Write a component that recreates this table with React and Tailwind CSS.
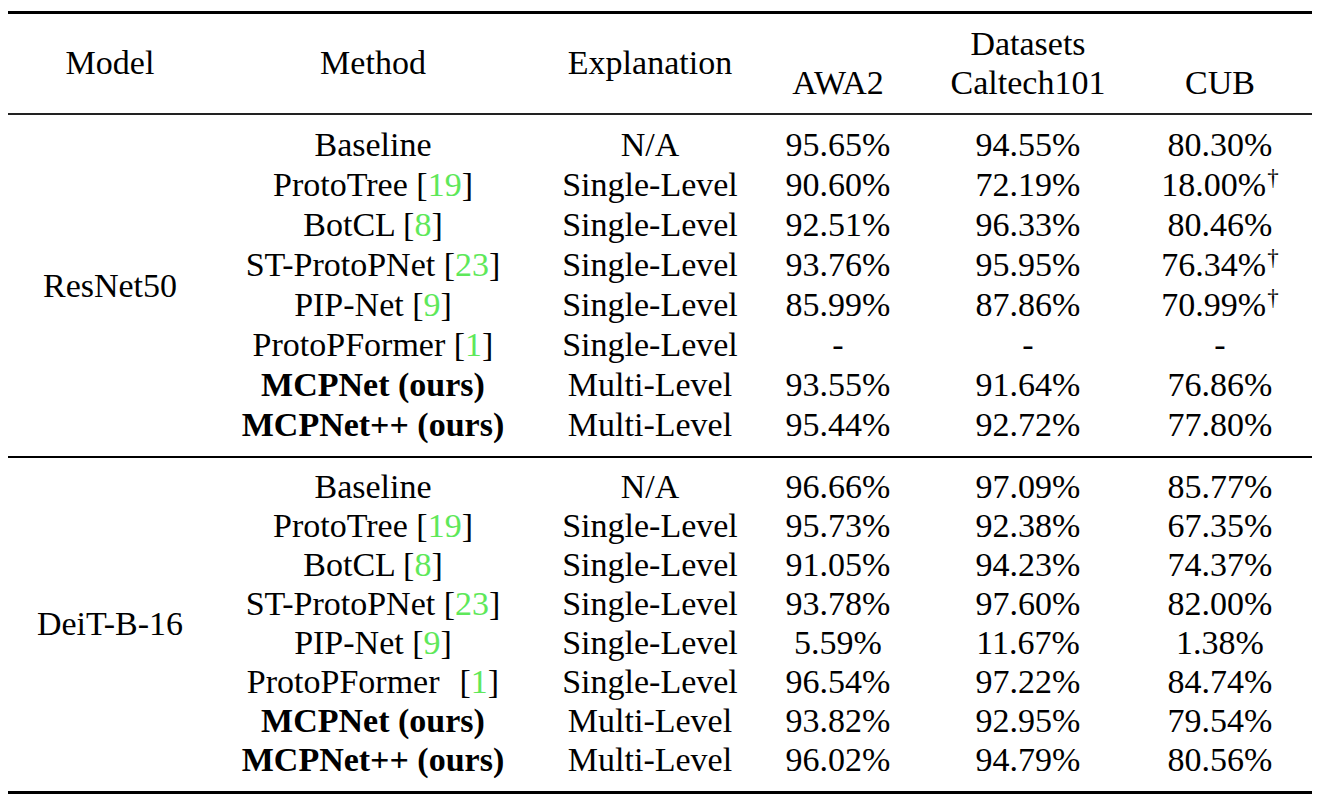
import React from "react";

const GREEN = "text-[#5ee85a]";

// Single cite marker like [19]
function Cite({ n, wide }) {
  return (
    <>
      {wide ? <span className="inline-block w-[20px]" /> : " "}[<span className={GREEN}>{n}</span>]
    </>
  );
}

function Val({ v, dag }) {
  if (!dag) return <>{v}</>;
  return (
    <>
      {v}
      <sup className="text-[23px] ml-[1px]">†</sup>
    </>
  );
}

const resnetRows = [
  { m: "Baseline", e: "N/A", a: "95.65%", c: "94.55%", u: "80.30%" },
  { m: "ProtoTree", cite: 19, e: "Single-Level", a: "90.60%", c: "72.19%", u: "18.00%", dag: true },
  { m: "BotCL", cite: 8, e: "Single-Level", a: "92.51%", c: "96.33%", u: "80.46%" },
  { m: "ST-ProtoPNet", cite: 23, e: "Single-Level", a: "93.76%", c: "95.95%", u: "76.34%", dag: true },
  { m: "PIP-Net", cite: 9, e: "Single-Level", a: "85.99%", c: "87.86%", u: "70.99%", dag: true },
  { m: "ProtoPFormer", cite: 1, e: "Single-Level", a: "-", c: "-", u: "-" },
  { m: "MCPNet (ours)", bold: true, e: "Multi-Level", a: "93.55%", c: "91.64%", u: "76.86%" },
  { m: "MCPNet++ (ours)", bold: true, e: "Multi-Level", a: "95.44%", c: "92.72%", u: "77.80%" },
];

const deitRows = [
  { m: "Baseline", e: "N/A", a: "96.66%", c: "97.09%", u: "85.77%" },
  { m: "ProtoTree", cite: 19, e: "Single-Level", a: "95.73%", c: "92.38%", u: "67.35%" },
  { m: "BotCL", cite: 8, e: "Single-Level", a: "91.05%", c: "94.23%", u: "74.37%" },
  { m: "ST-ProtoPNet", cite: 23, e: "Single-Level", a: "93.78%", c: "97.60%", u: "82.00%" },
  { m: "PIP-Net", cite: 9, e: "Single-Level", a: "5.59%", c: "11.67%", u: "1.38%" },
  { m: "ProtoPFormer", cite: 1, wide: true, e: "Single-Level", a: "96.54%", c: "97.22%", u: "84.74%" },
  { m: "MCPNet (ours)", bold: true, e: "Multi-Level", a: "93.82%", c: "92.95%", u: "79.54%" },
  { m: "MCPNet++ (ours)", bold: true, e: "Multi-Level", a: "96.02%", c: "94.79%", u: "80.56%" },
];

const cols = "grid grid-cols-[204px_322px_232px_144px_236px_1fr]";

function Section({ model, rows, rowH, className }) {
  return (
    <div className={`${cols} ${className}`}>
      <div className="row-span-8 flex items-center justify-center">{model}</div>
      {rows.map((r, i) => (
        <React.Fragment key={i}>
          <div className={`text-center whitespace-pre ${rowH} ${r.bold ? "font-bold" : ""}`}>
            {r.m}
            {r.cite && <Cite n={r.cite} wide={r.wide} />}
          </div>
          <div className={`text-center ${rowH}`}>{r.e}</div>
          <div className={`text-center ${rowH}`}>{r.a}</div>
          <div className={`text-center ${rowH}`}>{r.c}</div>
          <div className={`text-center pr-[18px] ${rowH}`}>
            <Val v={r.u} dag={r.dag} />
          </div>
        </React.Fragment>
      ))}
    </div>
  );
}

export default function App() {
  return (
    <div className="w-[1320px] h-[808px] bg-white text-black font-['Liberation_Serif','Times_New_Roman',serif] text-[34px]">
      <div className="ml-[8px] mr-[8px] pt-[11px]">
        <div className="h-[3px] bg-black" />

        {/* header */}
        <div className={`${cols} h-[99px] items-center leading-[39px] pb-[2px]`}>
          <div className="text-center">Model</div>
          <div className="text-center">Method</div>
          <div className="text-center">Explanation</div>
          <div className="text-center pt-[39px]">AWA2</div>
          <div className="text-center">
            <div>Datasets</div>
            <div>Caltech101</div>
          </div>
          <div className="text-center pr-[18px] pt-[39px]">CUB</div>
        </div>

        <div className="h-[2px] bg-[#222]" />

        <Section
          model="ResNet50"
          rows={resnetRows}
          rowH="h-[40px] leading-[40px]"
          className="pt-[10px] pb-[11px]"
        />

        <div className="h-[2px] bg-black" />

        <Section
          model="DeiT-B-16"
          rows={deitRows}
          rowH="h-[39px] leading-[39px]"
          className="pt-[9px] pb-[12px]"
        />

        <div className="h-[3px] bg-black" />
      </div>
    </div>
  );
}
